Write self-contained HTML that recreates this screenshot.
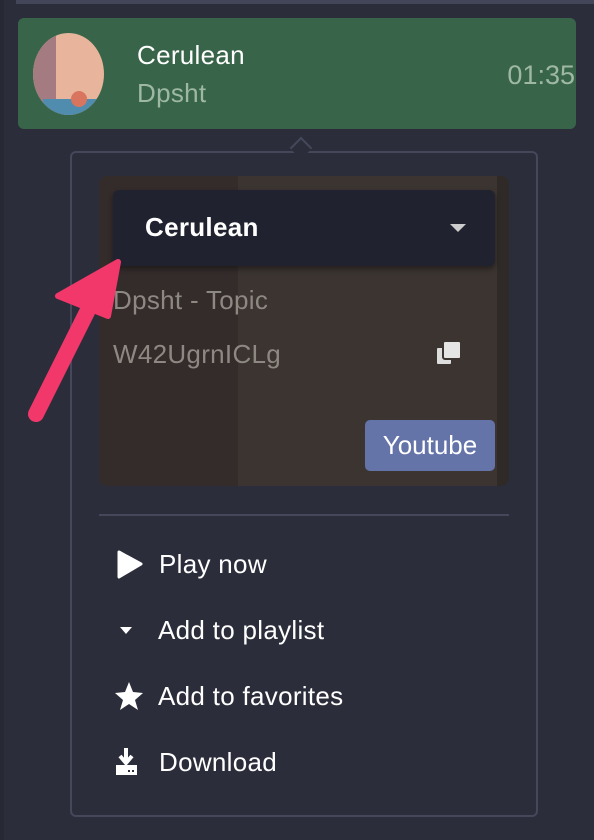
<!DOCTYPE html>
<html><head><meta charset="utf-8"><style>
*{margin:0;padding:0;box-sizing:border-box}
body{width:594px;height:840px;background:#2b2d3a;font-family:"Liberation Sans",sans-serif;position:relative;overflow:hidden}
.a{position:absolute}
.m{letter-spacing:0.3px}
</style></head><body>
<div class="a" style="left:16px;top:0;width:578px;height:4px;background:#434659"></div>
<div class="a" style="left:0;top:0;width:4px;height:840px;background:#262833"></div>
<div class="a" style="left:18px;top:18px;width:558px;height:111px;background:#386549;border-radius:6px"></div>
<div class="a" style="left:33px;top:33px;width:71px;height:82px;border-radius:50%;background:#e8b59c;overflow:hidden">
<div class="a" style="left:0;top:0;width:23px;height:82px;background:#a47b80"></div>
<div class="a" style="left:10px;top:66px;width:62px;height:20px;background:#4f8cae"></div>
<div class="a" style="left:38px;top:58px;width:16px;height:16px;border-radius:50%;background:#d9755f"></div>
</div>
<div class="a m" style="left:137px;top:40px;color:#fff;font-size:26px">Cerulean</div>
<div class="a m" style="left:137px;top:78px;color:#9fb8a6;font-size:26px">Dpsht</div>
<div class="a" style="right:19px;top:60px;color:#9fb8a6;font-size:27px">01:35</div>
<div class="a" style="left:70px;top:151px;width:468px;height:666px;border:2px solid #45485a;border-radius:6px;background:#2b2d3a"></div>
<div class="a" style="left:293px;top:140px;width:16px;height:16px;border-left:2px solid #45485a;border-top:2px solid #45485a;background:#2b2d3a;transform:rotate(45deg)"></div>
<div class="a" style="left:99px;top:176px;width:410px;height:310px;border-radius:8px;background:#3b3430;overflow:hidden">
<div class="a" style="left:0;top:0;width:139px;height:310px;background:#342c2b"></div>
<div class="a" style="left:398px;top:0;width:12px;height:310px;background:#2f2a28"></div>
</div>
<div class="a" style="left:113px;top:190px;width:382px;height:76px;background:#20222f;border-radius:6px;box-shadow:0 3px 6px rgba(0,0,0,.4)"></div>
<div class="a m" style="left:145px;top:212px;color:#fff;font-size:26px;font-weight:bold">Cerulean</div>
<div class="a" style="left:450px;top:224px;width:0;height:0;border-left:8px solid transparent;border-right:8px solid transparent;border-top:8px solid #ccc"></div>
<div class="a m" style="left:113px;top:285px;color:#8e8883;font-size:26px">Dpsht - Topic</div>
<div class="a m" style="left:113px;top:339px;color:#8e8883;font-size:26px">W42UgrnICLg</div>
<div class="a" style="left:435px;top:346px;width:18px;height:20px;background:#ddd;border-radius:3px;border:2px solid #3b3430"></div>
<div class="a" style="left:442px;top:340px;width:20px;height:20px;background:#e5e5e5;border-radius:3px;border:2px solid #3b3430"></div>
<div class="a" style="left:365px;top:420px;width:130px;height:51px;background:#6474a8;border-radius:5px;color:#fff;font-size:26px;text-align:center;line-height:51px">Youtube</div>
<div class="a" style="left:99px;top:514px;width:410px;height:2px;background:#45485a"></div>
<svg class="a" style="left:0;top:0" width="594" height="840">
<path d="M36 414 L98 290" stroke="#f2386b" stroke-width="16" stroke-linecap="round"/>
<path d="M118 262 L58 296 L108 316 Z" fill="#f2386b" stroke="#f2386b" stroke-width="6" stroke-linejoin="round"/>
<path d="M119 552 L141 564 L119 577 Z" fill="#fff" stroke="#fff" stroke-width="3" stroke-linejoin="round"/>
<path d="M120 627 L132 627 L126 634 Z" fill="#fff"/>
<path d="M129 682 L133 692 L143 693 L135 700 L138 710 L129 704 L120 710 L123 700 L115 693 L125 692 Z" fill="#fff"/>
<path d="M126 748 V762 M120 756 L126 763 L132 756" stroke="#fff" stroke-width="4" fill="none"/>
<path d="M116 765 H137 V775 H116 Z" fill="#fff"/>
<rect x="128" y="770" width="2" height="2" fill="#2b2d3a"/><rect x="132" y="770" width="2" height="2" fill="#2b2d3a"/>
</svg>
<div class="a m" style="left:159px;top:549px;color:#fff;font-size:26px">Play now</div>
<div class="a m" style="left:158px;top:615px;color:#fff;font-size:26px">Add to playlist</div>
<div class="a m" style="left:158px;top:681px;color:#fff;font-size:26px">Add to favorites</div>
<div class="a m" style="left:159px;top:747px;color:#fff;font-size:26px">Download</div>
</body></html>
